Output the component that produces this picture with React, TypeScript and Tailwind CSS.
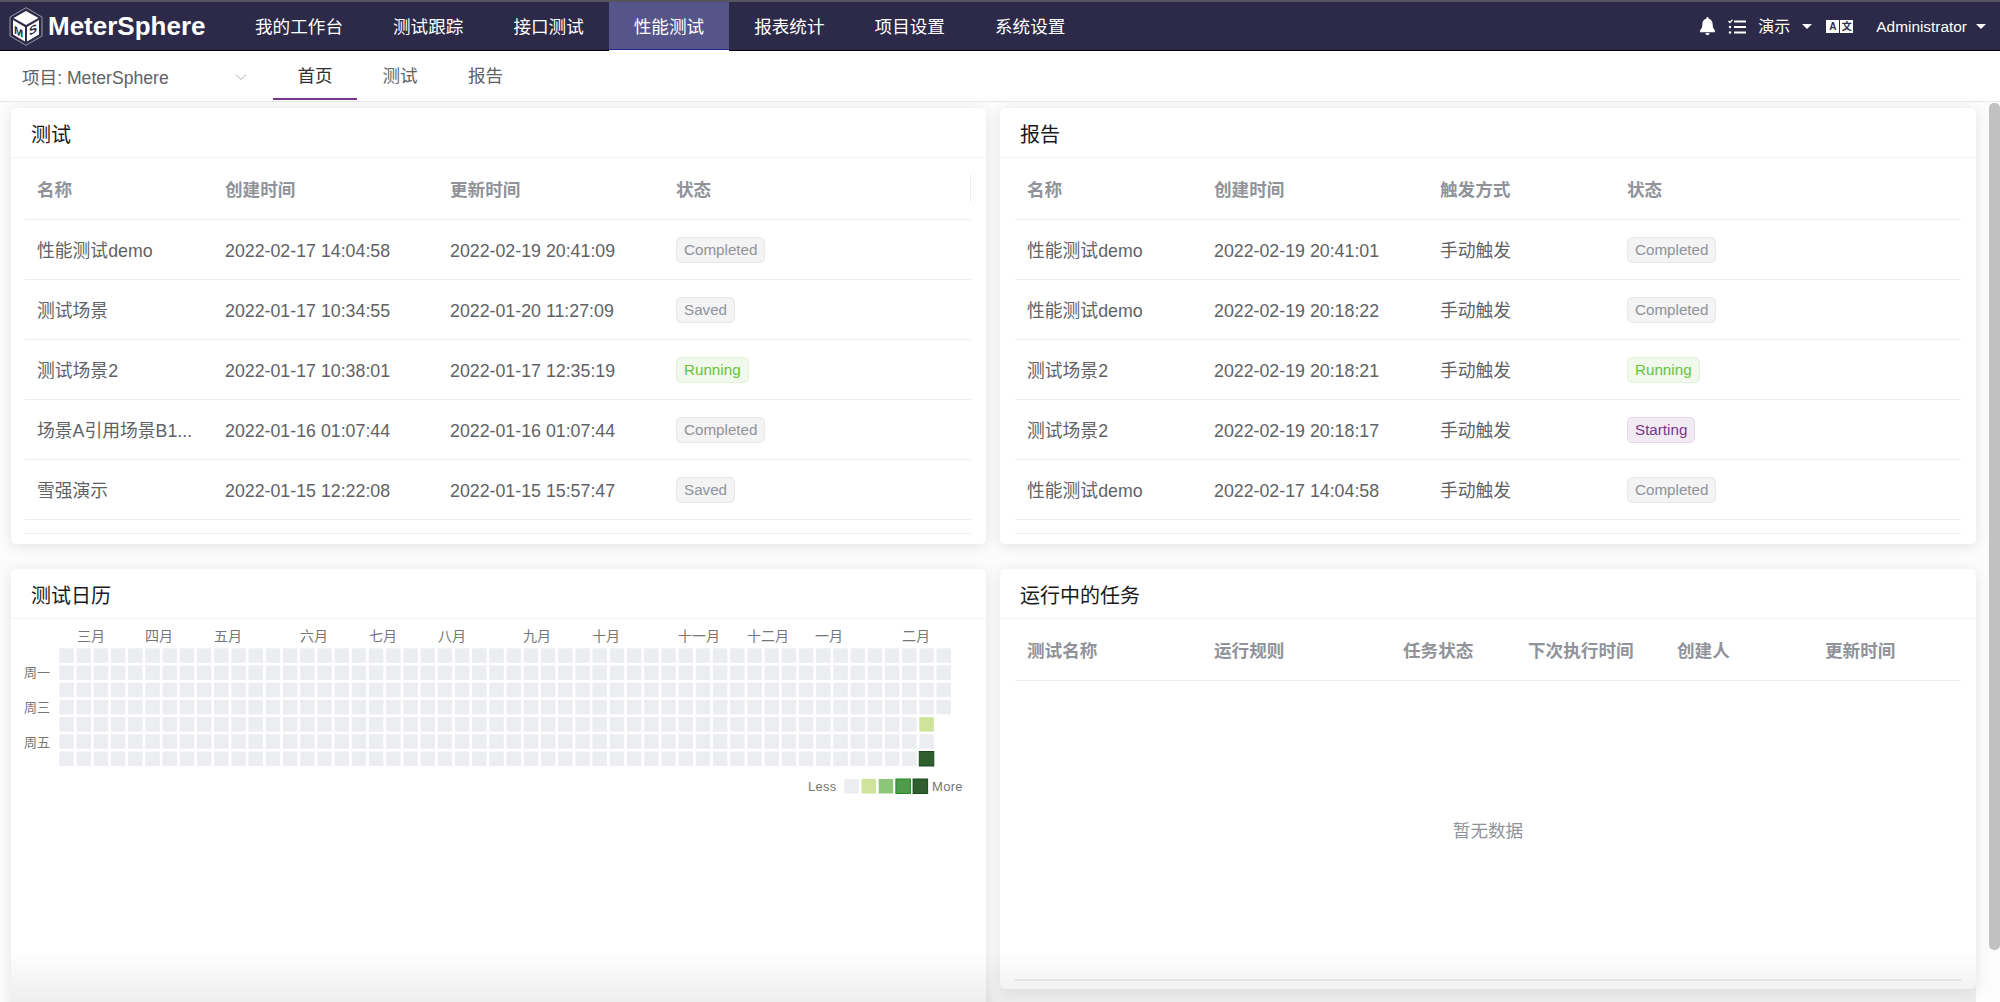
const navItems = ['我的工作台', '测试跟踪', '接口测试', '性能测试', '报表统计', '项目设置', '系统设置'];

const testRows = [
  ['性能测试demo', '2022-02-17 14:04:58', '2022-02-19 20:41:09', 'Completed'],
  ['测试场景', '2022-01-17 10:34:55', '2022-01-20 11:27:09', 'Saved'],
  ['测试场景2', '2022-01-17 10:38:01', '2022-01-17 12:35:19', 'Running'],
  ['场景A引用场景B1...', '2022-01-16 01:07:44', '2022-01-16 01:07:44', 'Completed'],
  ['雪强演示', '2022-01-15 12:22:08', '2022-01-15 15:57:47', 'Saved'],
];

const reportRows = [
  ['性能测试demo', '2022-02-19 20:41:01', '手动触发', 'Completed'],
  ['性能测试demo', '2022-02-19 20:18:22', '手动触发', 'Completed'],
  ['测试场景2', '2022-02-19 20:18:21', '手动触发', 'Running'],
  ['测试场景2', '2022-02-19 20:18:17', '手动触发', 'Starting'],
  ['性能测试demo', '2022-02-17 14:04:58', '手动触发', 'Completed'],
];

const months = [
  ['三月', 77], ['四月', 145], ['五月', 214], ['六月', 300], ['七月', 369], ['八月', 438],
  ['九月', 523], ['十月', 592], ['十一月', 678], ['十二月', 747], ['一月', 815], ['二月', 902],
] as const;

const legendColors = ['#ebedf0', '#cfe49a', '#8cc678', '#4f9a4c', '#2f5f2d'];
const legendStrokes = ['none', 'none', 'none', '#1f8a1f', '#1c4a1c'];

function Logo() {
  return (
    <svg width="34" height="39" viewBox="0 0 34 39" className="shrink-0">
      <path d="M17 .7 33 10v19L17 38.300 1 29V10z" fill="#2c2a48" stroke="#9a9aa6" strokeWidth="1" />
      <path d="M17 4 29.500 11 17 18 4.500 11z" fill="#fff" />
      <path d="M4 13 16 20v14.500L4 27.500z" fill="#fff" />
      <path d="M30 13 18 20v14.500l12-7z" fill="#fff" />
      <text x="0" y="0" fontSize="11" fontWeight="700" fill="#2c2a48" transform="translate(5 26) skewY(30)">M</text>
      <text x="0" y="0" fontSize="12" fontWeight="700" fill="#2c2a48" transform="translate(20 29) skewY(-30)">S</text>
    </svg>
  );
}

function Tag({ status }: { status: string }) {
  const styles: Record<string, string> = {
    Completed: 'bg-[#f4f4f5] border-[#e9e9eb] text-[#909399]',
    Saved: 'bg-[#f4f4f5] border-[#e9e9eb] text-[#909399]',
    Running: 'bg-[#f0f9eb] border-[#e1f3d8] text-[#67c23a]',
    Starting: 'bg-[#f2ebf3] border-[#e4d7e7] text-[#783887]',
  };
  return (
    <span className={`inline-flex h-[26px] items-center rounded-[5px] border px-[7px] pt-[1px] text-[15.2px] ${styles[status]}`}>
      {status}
    </span>
  );
}

function Card({ title, className, children }: { title: string; className?: string; children: React.ReactNode }) {
  return (
    <section className={`flex flex-col rounded-[5px] bg-white shadow-[0_2px_14px_rgba(0,0,0,0.1)] ${className ?? ''}`}>
      <h2 className="flex h-[50px] shrink-0 items-center border-b border-[#f2f2f2] px-[20px] pt-[5px] text-[20px] text-[#1a1a1a]">{title}</h2>
      {children}
    </section>
  );
}

function HeadRow({ cols }: { cols: [string, string][] }) {
  return (
    <div className="flex h-[62px] items-center border-b border-[#ebeef5] pt-[4px] text-[17.6px] font-semibold text-[#909399]">
      {cols.map(([label, width]) => (
        <div key={label} className={`pl-[12px] ${width}`}>{label}</div>
      ))}
    </div>
  );
}

function TestsTable() {
  return (
    <div className="relative ml-[14px] mr-[15px] flex-1 text-[17.8px] text-[#606266]">
      <HeadRow cols={[['名称', 'w-[188px]'], ['创建时间', 'w-[225px]'], ['更新时间', 'w-[226px]'], ['状态', 'flex-1']]} />
      <div className="absolute right-0 top-[16px] h-[28px] w-px bg-[#ebeef5]" />
      {testRows.map((row) => (
        <div key={row[0]} className="flex h-[60px] items-center border-b border-[#ebeef5]">
          <div className="w-[188px] pl-[12px] pt-[3px]">{row[0]}</div>
          <div className="w-[225px] pl-[12px] pt-[3px]">{row[1]}</div>
          <div className="w-[226px] pl-[12px] pt-[3px]">{row[2]}</div>
          <div className="pl-[12px]"><Tag status={row[3]} /></div>
        </div>
      ))}
      <div className="mt-[13px] border-b border-[#ebeef5]" />
    </div>
  );
}

function ReportsTable() {
  return (
    <div className="ml-[15px] mr-[15px] flex-1 text-[17.8px] text-[#606266]">
      <HeadRow cols={[['名称', 'w-[187px]'], ['创建时间', 'w-[226px]'], ['触发方式', 'w-[187px]'], ['状态', 'flex-1']]} />
      {reportRows.map((row, i) => (
        <div key={i} className="flex h-[60px] items-center border-b border-[#ebeef5]">
          <div className="w-[187px] pl-[12px] pt-[3px]">{row[0]}</div>
          <div className="w-[226px] pl-[12px] pt-[3px]">{row[1]}</div>
          <div className="w-[187px] pl-[12px] pt-[3px]">{row[2]}</div>
          <div className="pl-[12px]"><Tag status={row[3]} /></div>
        </div>
      ))}
      <div className="mt-[13px] border-b border-[#ebeef5]" />
    </div>
  );
}

function cellColor(col: number, row: number) {
  if (col === 50 && row === 4) return '#cfe49a';
  if (col === 50 && row === 6) return '#2f5f2d';
  return '#ebedf0';
}

function Heatmap() {
  const cells = [];
  for (let col = 0; col < 52; col++) {
    const rows = col === 51 ? 4 : 7;
    for (let row = 0; row < rows; row++) {
      const dark = col === 50 && row === 6;
      cells.push(
        <rect
          key={`${col}-${row}`}
          x={59.3 + col * 17.2}
          y={648.3 + row * 17.2}
          width="14.500"
          height="14.500"
          fill={cellColor(col, row)}
          stroke={dark ? '#1c4a1c' : 'none'}
        />,
      );
    }
  }
  // svg 坐标直接用页面坐标, 减去卡片偏移
  return (
    <svg width="975" height="240" viewBox="11 619 975 240" className="font-['Liberation_Sans','Noto_Sans_CJK_SC',sans-serif]">
      {months.map(([label, x]) => (
        <text key={label} x={x} y={641} fontSize="14" fill="#767676">{label}</text>
      ))}
      <text x="24" y="677" fontSize="13" fill="#767676">周一</text>
      <text x="24" y="712" fontSize="13" fill="#767676">周三</text>
      <text x="24" y="747" fontSize="13" fill="#767676">周五</text>
      {cells}
      <text x="808" y="791" fontSize="13" letterSpacing="0.3" fill="#767676">Less</text>
      {legendColors.map((color, i) => (
        <rect key={color} x={844.3 + i * 17.2} y={779} width="14.500" height="14.500" fill={color} stroke={legendStrokes[i]} />
      ))}
      <text x="932" y="791" fontSize="13" letterSpacing="0.3" fill="#767676">More</text>
    </svg>
  );
}

function JobsTable() {
  return (
    <div className="mb-[8px] ml-[15px] mr-[15px] flex flex-1 flex-col border-b-2 border-[#ececec] text-[17.6px]">
      <HeadRow
        cols={[
          ['测试名称', 'w-[187px]'],
          ['运行规则', 'w-[189px]'],
          ['任务状态', 'w-[125px]'],
          ['下次执行时间', 'w-[149px]'],
          ['创建人', 'w-[148px]'],
          ['更新时间', 'flex-1'],
        ]}
      />
      <div className="flex flex-1 items-center justify-center pt-[3px] text-[#909399]">暂无数据</div>
    </div>
  );
}

export default function App() {
  return (
    <div className="relative flex h-[1002px] w-[2000px] flex-col overflow-hidden bg-white font-['Liberation_Sans','Noto_Sans_CJK_SC',sans-serif]">
      <header className="flex h-[51px] shrink-0 items-stretch border-b border-t-2 border-b-black border-t-[#55545c] bg-[#2c2a48] text-white">
        <div className="flex w-[230px] items-center gap-[5px] pl-[9px] text-[26px] font-bold">
          <Logo />
          <span>MeterSphere</span>
        </div>
        <nav className="flex">
          {navItems.map((item, i) => (
            <div
              key={item}
              className={`flex items-center px-[25px] pt-[3px] text-[17.6px] ${i === 3 ? 'border-b border-[#27278a] bg-[#55558a] shadow-[0_1px_0_#fff]' : ''}`}
            >
              {item}
            </div>
          ))}
        </nav>
        <div className="ml-auto flex items-center pr-[14px] pt-[1px] text-[15.4px]">
          <svg width="17" height="19" viewBox="0 0 18 20" fill="#fff" className="mr-[12px]">
            <path d="M9 0a1.500 1.500 0 0 1 1.300 1.700c3 .7 4.200 3.300 4.200 6.300 0 3.200.8 4.800 2.500 6.200V16H1v-1.800C2.700 12.800 3.500 11.200 3.500 8s1.200-5.600 4.200-6.300A1.500 1.500 0 0 1 9 0zM6.800 17h4.400a2.200 2.200 0 0 1-4.400 0z" />
          </svg>
          <svg width="18" height="16" viewBox="0 0 18 16" fill="none" stroke="#fff" strokeWidth="2" className="mr-[12px]">
            <path d="M6 2.500h12M6 8h12M6 13.500h12" />
            <path d="M.5 2 2 3.500 4.500.8" strokeWidth="1.300" />
            <circle cx="2" cy="8" r="1.200" fill="#fff" stroke="none" />
            <circle cx="2" cy="13.500" r="1.200" fill="#fff" stroke="none" />
          </svg>
          <span className="mr-[12px] text-[16px]">演示</span>
          <span className="mr-[14px] h-0 w-0 border-x-[5px] border-t-[5px] border-x-transparent border-t-white" />
          <div className="mr-[23px] flex gap-px text-[10px] font-bold leading-none text-[#2c2a48]">
            <span className="flex h-[13px] w-[13px] items-center justify-center bg-white">A</span>
            <span className="flex h-[13px] w-[13px] items-center justify-center bg-white">文</span>
          </div>
          <span className="mr-[9px]">Administrator</span>
          <span className="h-0 w-0 border-x-[5px] border-t-[5px] border-x-transparent border-t-white" />
        </div>
      </header>

      <div className="flex h-[51px] shrink-0 items-start border-b border-[#e9e9e9] bg-white">
        <div className="flex h-[49px] w-[273px] items-center pl-[22px] pt-[6px] text-[17.6px] text-[#606266]">
          <span>项目: MeterSphere</span>
          <svg width="12" height="8" viewBox="0 0 12 8" fill="none" stroke="#a8abb2" className="ml-[66px] -mt-[4px]">
            <path d="M1 1.500 6 6.500l5-5" />
          </svg>
        </div>
        <div className="flex h-[49px] text-[17.6px] text-[#606266]">
          <div className="flex w-[84px] items-center justify-center border-b-2 border-[#783887] pt-[4px] text-[#303133]">首页</div>
          <div className="flex w-[86px] items-center justify-center pt-[2px]">测试</div>
          <div className="flex w-[85px] items-center justify-center pt-[2px]">报告</div>
        </div>
      </div>

      <main className="grid flex-1 grid-cols-[975px_976px] grid-rows-[436px_420px] gap-x-[14px] gap-y-[25px] bg-[#fcfcfc] pl-[11px] pt-[6px]">
        <Card title="测试">
          <TestsTable />
        </Card>
        <Card title="报告">
          <ReportsTable />
        </Card>
        {/* 左下卡片超出可视区 */}
        <Card title="测试日历" className="h-[480px]">
          <Heatmap />
        </Card>
        <Card title="运行中的任务">
          <JobsTable />
        </Card>
      </main>

      {/* 底部渐隐 */}
      <div className="pointer-events-none absolute bottom-0 left-[11px] h-[52px] w-[1965px] bg-gradient-to-b from-transparent to-[rgba(0,0,0,0.065)]" />
      <div className="absolute right-0 top-[103px] h-[847px] w-[11px] rounded-[5px] bg-[#c1c1c1]" />
    </div>
  );
}
